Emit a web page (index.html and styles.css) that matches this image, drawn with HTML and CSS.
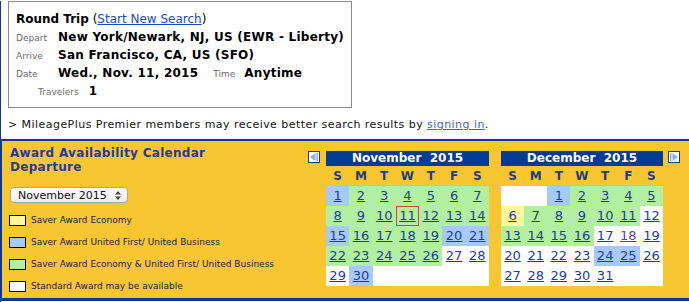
FILE: index.html
```html
<!DOCTYPE html>
<html lang="en">

<head>
    <meta charset="UTF-8">
    <title>Award Availability Calendar</title>
    <link rel="stylesheet" href="styles.css">
</head>

<body>
    <div class="page">
        <!-- search summary -->
        <div class="trip-box">
            <div class="trip-title"><b>Round Trip</b> (<a href="#">Start New Search</a>)</div>
            <div class="trip-row">
                <span class="label">Depart</span>
                <span class="value">New York/Newark, NJ, US (EWR - Liberty)</span>
            </div>
            <div class="trip-row">
                <span class="label">Arrive</span>
                <span class="value">San Francisco, CA, US (SFO)</span>
            </div>
            <div class="trip-row">
                <span class="label">Date</span>
                <span class="value">Wed., Nov. 11, 2015</span>
                <span class="label time-label">Time</span>
                <span class="value">Anytime</span>
            </div>
            <div class="trip-row travelers">
                <span class="label">Travelers</span>
                <span class="value">1</span>
            </div>
        </div>

        <p class="promo">&gt; MileagePlus Premier members may receive better search results by <a href="#">signing in</a>.</p>

        <!-- award calendar -->
        <div class="award">
            <div class="award-side">
                <h2>Award Availability Calendar<br>Departure</h2>

                <div class="month-select">
                    <span>November 2015</span>
                    <svg width="6" height="9" viewBox="0 0 6 9">
                        <polygon points="3,0 6,3.5 0,3.5" fill="#444" />
                        <polygon points="0,5.5 6,5.5 3,9" fill="#444" />
                    </svg>
                </div>

                <ul class="legend">
                    <li><span class="swatch saver-econ"></span>Saver Award Economy</li>
                    <li><span class="swatch saver-first"></span>Saver Award United First/ United Business</li>
                    <li><span class="swatch saver-both"></span>Saver Award Economy &amp; United First/ United Business</li>
                    <li><span class="swatch standard"></span>Standard Award may be available</li>
                </ul>
            </div>

            <div class="calendars">
                <a href="#" class="nav">
                    <svg width="12" height="12" viewBox="0 0 12 12">
                        <rect x="0.5" y="0.5" width="11" height="11" fill="#fff" stroke="#1c3a8c" />
                        <rect x="8.5" y="2" width="1.5" height="8" fill="#8cb0ec" />
                        <polygon points="2,6 7.5,2 7.5,10" fill="#8cb0ec" />
                    </svg>
                </a>

                <table class="cal">
                    <tr><th colspan="7" class="cal-head">November&nbsp; 2015</th></tr>
                    <tr class="dow"><td>S</td><td>M</td><td>T</td><td>W</td><td>T</td><td>F</td><td>S</td></tr>
                    <tr>
                        <td class="first"><a href="#">1</a></td>
                        <td class="both"><a href="#">2</a></td>
                        <td class="both"><a href="#">3</a></td>
                        <td class="both"><a href="#">4</a></td>
                        <td class="both"><a href="#">5</a></td>
                        <td class="both"><a href="#">6</a></td>
                        <td class="both"><a href="#">7</a></td>
                    </tr>
                    <tr>
                        <td class="both"><a href="#">8</a></td>
                        <td class="both"><a href="#">9</a></td>
                        <td class="both"><a href="#">10</a></td>
                        <td class="both today"><a href="#">11</a></td>
                        <td class="both"><a href="#">12</a></td>
                        <td class="both"><a href="#">13</a></td>
                        <td class="both"><a href="#">14</a></td>
                    </tr>
                    <tr>
                        <td class="first"><a href="#">15</a></td>
                        <td class="both"><a href="#">16</a></td>
                        <td class="both"><a href="#">17</a></td>
                        <td class="both"><a href="#">18</a></td>
                        <td class="both"><a href="#">19</a></td>
                        <td class="first"><a href="#">20</a></td>
                        <td class="first"><a href="#">21</a></td>
                    </tr>
                    <tr>
                        <td class="both"><a href="#">22</a></td>
                        <td class="both"><a href="#">23</a></td>
                        <td class="both"><a href="#">24</a></td>
                        <td class="both"><a href="#">25</a></td>
                        <td class="both"><a href="#">26</a></td>
                        <td><a href="#">27</a></td>
                        <td><a href="#">28</a></td>
                    </tr>
                    <tr>
                        <td><a href="#">29</a></td>
                        <td class="first"><a href="#">30</a></td>
                        <td></td><td></td><td></td><td></td><td></td>
                    </tr>
                </table>

                <table class="cal cal-dec">
                    <tr><th colspan="7" class="cal-head">December&nbsp; 2015</th></tr>
                    <tr class="dow"><td>S</td><td>M</td><td>T</td><td>W</td><td>T</td><td>F</td><td>S</td></tr>
                    <tr>
                        <td></td><td></td>
                        <td class="first"><a href="#">1</a></td>
                        <td class="both"><a href="#">2</a></td>
                        <td class="both"><a href="#">3</a></td>
                        <td class="both"><a href="#">4</a></td>
                        <td class="both"><a href="#">5</a></td>
                    </tr>
                    <tr>
                        <td class="econ"><a href="#">6</a></td>
                        <td class="both"><a href="#">7</a></td>
                        <td class="both"><a href="#">8</a></td>
                        <td class="both"><a href="#">9</a></td>
                        <td class="both"><a href="#">10</a></td>
                        <td class="both"><a href="#">11</a></td>
                        <td><a href="#">12</a></td>
                    </tr>
                    <tr>
                        <td class="both"><a href="#">13</a></td>
                        <td class="both"><a href="#">14</a></td>
                        <td class="both"><a href="#">15</a></td>
                        <td class="both"><a href="#">16</a></td>
                        <td><a href="#">17</a></td>
                        <td><a href="#" class="visited">18</a></td>
                        <td><a href="#">19</a></td>
                    </tr>
                    <tr>
                        <td><a href="#">20</a></td>
                        <td><a href="#">21</a></td>
                        <td><a href="#">22</a></td>
                        <td><a href="#">23</a></td>
                        <td class="first"><a href="#">24</a></td>
                        <td class="first"><a href="#">25</a></td>
                        <td><a href="#">26</a></td>
                    </tr>
                    <tr>
                        <td><a href="#">27</a></td>
                        <td><a href="#">28</a></td>
                        <td><a href="#">29</a></td>
                        <td><a href="#">30</a></td>
                        <td><a href="#">31</a></td>
                        <td></td><td></td>
                    </tr>
                </table>

                <a href="#" class="nav next">
                    <svg width="12" height="12" viewBox="0 0 12 12">
                        <rect x="0.5" y="0.5" width="11" height="11" fill="#fff" stroke="#1c3a8c" />
                        <rect x="2" y="2" width="1.5" height="8" fill="#8cb0ec" />
                        <polygon points="10,6 4.5,2 4.5,10" fill="#8cb0ec" />
                    </svg>
                </a>
            </div>
        </div>
    </div>
</body>

</html>
```

FILE: styles.css
```css
body {
    margin: 0;
    padding: 0;
    font-family: "DejaVu Sans", Verdana, sans-serif;
    color: #000;
    background-color: #fff;
}

.page {
    border-left: 1px solid #0b3a93;
    height: 302px;
    box-sizing: border-box;
}

/* 搜索摘要 */
.trip-box {
    margin: 1px 0 0 7px;
    width: 344px;
    height: 107px;
    box-sizing: border-box;
    border: 1px solid #8a8a8a;
    padding: 8px 0 0 7px;
}

.trip-title,
.trip-row {
    font-size: 12px;
    line-height: 18px;
    height: 18px;
    white-space: nowrap;
}

.trip-title a {
    color: #1d48c0;
}

.trip-row {
    display: flex;
    align-items: baseline;
}

.trip-row .label {
    width: 42px;
    font-size: 9px;
    color: #6a6a6a;
}

.trip-row .value {
    font-weight: bold;
    letter-spacing: 0.25px;
}

.trip-row .time-label {
    width: auto;
    margin: 0 9px 0 15px;
}

.travelers {
    padding-left: 22px;
}

.travelers .label {
    width: auto;
    margin-right: 10px;
}

.promo {
    margin: 10px 0 7px 7px;
    font-size: 11px;
    line-height: 14px;
    letter-spacing: 0.45px;
    color: #111;
}

.promo a {
    color: #3d5fdc;
}

/* 奖励日历 */
.award {
    display: flex;
    margin-left: -1px;
    background-color: #f8c631;
    border-top: 2px solid #0b3a93;
    border-left: 2px solid #0b3a93;
    border-bottom: 3px solid #0b3a93;
    padding: 0 0 1px 8px;
}

.award-side {
    width: 298px;
}

.award-side h2 {
    margin: 5px 0 0;
    font-size: 12px;
    line-height: 14px;
    letter-spacing: 0.3px;
    color: #1c3d9c;
}

.month-select {
    display: flex;
    align-items: center;
    justify-content: space-between;
    margin-top: 13px;
    width: 118px;
    height: 16px;
    box-sizing: border-box;
    padding: 0 6px 0 7px;
    border: 1px solid #a6a6a6;
    border-radius: 4px;
    background: linear-gradient(#ffffff, #ececec);
    font-size: 11px;
    color: #111;
}

.legend {
    list-style: none;
    margin: 6px 0 0;
    padding: 0;
}

.legend li {
    display: flex;
    align-items: center;
    height: 22px;
    font-size: 9px;
    color: #222;
}

.swatch {
    width: 17px;
    height: 11px;
    box-sizing: border-box;
    border: 1px solid #000;
    margin: 0 5px 0 -1px;
}

.saver-econ { background-color: #fff69e; }
.saver-first { background-color: #a7caf5; }
.saver-both { background-color: #b2efa0; }
.standard { background-color: #fff; }

.calendars {
    display: flex;
    align-items: flex-start;
    padding-top: 10px;
}

.nav {
    display: block;
    width: 12px;
    height: 12px;
    margin-right: 6px;
}

.nav svg {
    display: block;
}

.nav.next {
    margin: 0 0 0 5px;
}

.cal {
    width: 163px;
    table-layout: fixed;
    border-collapse: collapse;
    border-spacing: 0;
}

.cal-dec {
    width: 162px;
    margin-left: 12px;
}

.cal td,
.cal th {
    padding: 0;
    text-align: center;
}

.cal-head {
    height: 15px;
    line-height: 15px;
    background-color: #023c97;
    color: #fff;
    font-size: 12px;
    font-weight: bold;
    white-space: nowrap;
}

.cal td {
    height: 20px;
    line-height: 20px;
    font-size: 13px;
    background-color: #fff;
}

.cal .dow td {
    background-color: transparent;
    font-size: 12px;
    font-weight: bold;
    color: #1f3a86;
}

.cal td a {
    color: #1c3d9e;
}

.cal td a.visited {
    color: #5b3fa3;
}

.cal td.both { background-color: #b2efa0; }
.cal td.first { background-color: #a7caf5; }
.cal td.econ { background-color: #fff69e; }

.cal td.today {
    outline: 1px solid #d9482c;
    outline-offset: -1px;
}
```
